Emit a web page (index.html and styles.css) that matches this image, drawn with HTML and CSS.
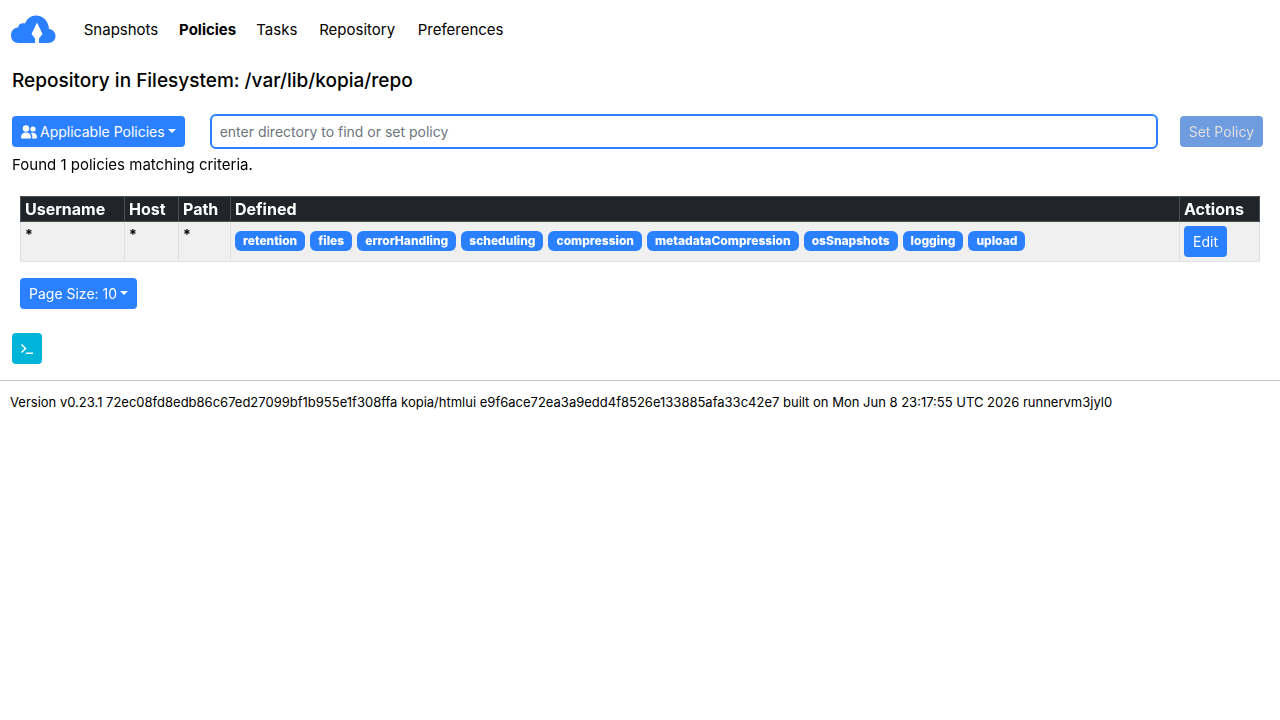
FILE: index.html
```
<!DOCTYPE html>
<html lang="en">
<head>
  <meta charset="UTF-8">
  <meta name="viewport" content="width=device-width, initial-scale=1.0">
  <title>Kopia</title>
  <link rel="stylesheet" href="styles.css">
</head>
<body>
  <nav class="navbar">
    <a class="brand" href="#" aria-label="Kopia">
      <svg width="46" height="30" viewBox="0 0 46 30">
        <path fill="#2a80ff" d="M8.500 28C4 28 1 25 1 20.500C1 16 3.500 13 8 12.500C8.500 9 11.500 7.500 15 8.500C17 3.500 21 .5 26 .5C33 .5 38.500 6 39 14C43 14.500 45.500 17.500 45.500 21C45.500 25 42.500 28 38 28Z"/>
        <path fill="#fff" d="M27 7.500L32.500 19L29 23.500V28.500H25V23.500L21.500 19Z"/>
      </svg>
    </a>
    <a class="nav-link" href="#" data-title="Snapshots">Snapshots</a>
    <a class="nav-link active" href="#" data-title="Policies">Policies</a>
    <a class="nav-link" href="#" data-title="Tasks">Tasks</a>
    <a class="nav-link" href="#" data-title="Repository">Repository</a>
    <a class="nav-link" href="#" data-title="Preferences">Preferences</a>
  </nav>

  <main class="container">
    <h5 class="title">Repository in Filesystem: /var/lib/kopia/repo</h5>

    <form class="toolbar">
      <button type="button" class="btn">
        <svg width="16" height="14" viewBox="0 0 16 14" fill="#fff">
          <circle cx="5" cy="3.500" r="3.200"/>
          <circle cx="12" cy="4" r="2.600"/>
          <path d="M0 12C0 9.500 2 7.500 5 7.500S10 9.500 10 12C10 13 9.500 13.500 8.500 13.500H1.500C.5 13.500 0 13 0 12Z"/>
          <path d="M11 13.500C12 11.500 11 9 9.800 8C13.500 7 16 9 16 12C16 13 15.500 13.500 14.500 13.500Z"/>
        </svg>
        Applicable Policies
        <span class="caret"></span>
      </button>
      <input class="path-input" type="text" aria-label="Directory" placeholder="enter directory to find or set policy" autofocus>
      <button type="submit" class="btn" disabled>Set Policy</button>
    </form>

    <p class="found">Found 1 policies matching criteria.</p>

    <div class="table-area">
      <table class="table">
        <thead>
          <tr>
            <th class="col-user">Username</th>
            <th class="col-host">Host</th>
            <th class="col-path">Path</th>
            <th>Defined</th>
            <th class="col-actions">Actions</th>
          </tr>
        </thead>
        <tbody>
          <tr>
            <td class="any">*</td>
            <td class="any">*</td>
            <td class="any">*</td>
            <td>
              <div class="badges">
                <span class="badge">retention</span>
                <span class="badge">files</span>
                <span class="badge">errorHandling</span>
                <span class="badge">scheduling</span>
                <span class="badge">compression</span>
                <span class="badge">metadataCompression</span>
                <span class="badge">osSnapshots</span>
                <span class="badge">logging</span>
                <span class="badge">upload</span>
              </div>
            </td>
            <td><a class="btn" href="#">Edit</a></td>
          </tr>
        </tbody>
      </table>
      <button type="button" class="btn">Page Size: 10 <span class="caret"></span></button>
    </div>

    <button type="button" class="btn btn-cli" aria-label="Show CLI command">
      <svg width="14" height="14" viewBox="0 0 14 14" fill="none" stroke="#fff" stroke-width="1.500">
        <path d="M1.500 2.500L5.500 6.500L1.500 10.500M6 11.200H13"/>
      </svg>
    </button>
  </main>

  <footer class="footer">Version v0.23.1 72ec08fd8edb86c67ed27099bf1b955e1f308ffa kopia/htmlui e9f6ace72ea3a9edd4f8526e133885afa33c42e7 built on Mon Jun 8 23:17:55 UTC 2026 runnervm3jyl0</footer>
</body>
</html>
```
FILE: styles.css
```
* {
  box-sizing: border-box;
}

body {
  margin: 0;
  font-family: Inter, "Liberation Sans", sans-serif;
  font-size: 15px;
  line-height: 24px;
  color: #000;
  background-color: #fff;
}

.navbar {
  display: flex;
  align-items: center;
  gap: 19px;
  height: 60px;
  padding: 0 10px;
}

.brand {
  display: flex;
  margin-right: 7px;
}

.nav-link {
  color: #000;
  text-decoration: none;
  text-align: center;
}

/* keeps the bold width reserved, so links don't move when one is active */
.nav-link::after {
  content: attr(data-title);
  display: block;
  height: 0;
  overflow: hidden;
  visibility: hidden;
  font-weight: 700;
}

.nav-link.active {
  font-weight: 700;
}

.container {
  padding: 9px 12px 16px;
}

.title {
  margin: 0 0 23px;
  font-size: 19px;
  font-weight: 500;
  line-height: 24px;
}

.toolbar {
  display: flex;
  align-items: center;
  padding-right: 5px;
}

.btn {
  display: flex;
  align-items: center;
  gap: 3px;
  height: 31px;
  padding: 0 9px;
  border: none;
  border-radius: 4px;
  font-family: inherit;
  font-size: 14px;
  font-weight: 400;
  line-height: 21px;
  color: #fff;
  background-color: #2a80ff;
  text-decoration: none;
  white-space: nowrap;
  cursor: pointer;
}

.btn:disabled {
  color: #dedede;
  background-color: #6f9bdf;
}

.caret {
  margin-bottom: 2px;
  border-top: 4px solid #fff;
  border-left: 4px solid transparent;
  border-right: 4px solid transparent;
}

.path-input {
  flex: 1;
  height: 35px;
  margin: -2px 22px -2px 25px;
  padding: 0 8px;
  border: 2px solid #2a80ff;
  border-radius: 6px;
  outline: none;
  font-family: inherit;
  font-size: 14px;
  color: #212529;
}

.path-input::placeholder {
  color: #6c757d;
}

.found {
  margin: 6px 0 19px;
}

.table-area {
  margin: 0 8px 24px;
}

.table {
  width: 100%;
  margin-bottom: 16px;
  border-collapse: collapse;
}

.table th,
.table td {
  padding: 4px;
  border: 1px solid #dee2e6;
  text-align: left;
  vertical-align: top;
}

.table th {
  padding: 0 4px;
  border-color: #4d5154;
  font-size: 16px;
  font-weight: 700;
  color: #fff;
  background-color: #212529;
}

.table td {
  background-color: #f0f0f0;
}

.table .any {
  font-size: 14px;
  font-weight: 700;
  line-height: 18px;
}

.col-user {
  width: 104px;
}

.col-host {
  width: 54px;
}

.col-path {
  width: 52px;
}

.col-actions {
  width: 80px;
}

.badges {
  display: flex;
  flex-wrap: wrap;
  gap: 5px;
  padding-top: 5px;
}

.badge {
  padding: 4px 8px;
  border-radius: 6px;
  font-size: 12px;
  font-weight: 800;
  line-height: 12px;
  color: #fff;
  background-color: #2a80ff;
}

.table .btn {
  width: fit-content;
}

.btn-cli {
  padding: 0 8px;
  background-color: #00b5d8;
}

.footer {
  padding: 9px 10px;
  border-top: 1px solid #c8c8c8;
  font-size: 13px;
}
```
